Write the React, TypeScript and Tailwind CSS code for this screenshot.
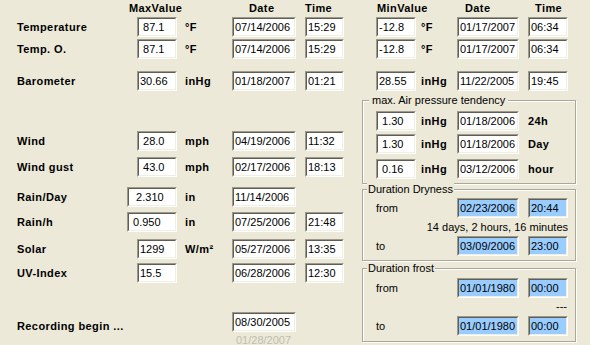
const font = "font-['Liberation_Sans',Arial,sans-serif]";

function Box({ text, w, blue }: { text: string; w: string; blue?: boolean }) {
  return (
    <div className={`${w} h-[20px] shrink-0 border border-t-[#9d9a8c] border-l-[#9d9a8c] border-b-white border-r-white`}>
      <div
        className={`h-full overflow-hidden whitespace-pre border border-t-[#5f5d54] border-l-[#5f5d54] border-b-[#f1efe2] border-r-[#f1efe2] pl-[1px] text-[11px] leading-[16px] text-black ${
          blue ? 'bg-[#99ccff]' : 'bg-white'
        }`}
      >
        {text}
      </div>
    </div>
  );
}

type Row = {
  label: string;
  value: string;
  wide?: boolean;
  unit: string;
  date: string;
  time?: string;
  mt: string;
};

function LeftPart({ row }: { row: Row }) {
  return (
    <>
      <div className="w-[126px] shrink-0 pl-[17px] text-[11px] font-bold tracking-[0.4px]">{row.label}</div>
      <div className="flex w-[51px] shrink-0 justify-end">
        <Box text={row.value} w={row.wide ? 'w-[50px]' : 'w-[40px]'} />
      </div>
      <div className="w-[55px] shrink-0 pl-[8px] text-[11px] font-bold tracking-[0.4px]">{row.unit}</div>
      <Box text={row.date} w="w-[64px]" />
      {row.time && (
        <>
          <div className="w-[9px] shrink-0" />
          <Box text={row.time} w="w-[39px]" />
        </>
      )}
    </>
  );
}

const topRows = [
  { label: 'Temperature', value: ' 87.1', unit: '°F', date: '07/14/2006', time: '15:29', mt: 'mt-[2px]', min: '-12.8', minUnit: '°F', minDate: '01/17/2007', minTime: '06:34' },
  { label: 'Temp. O.', value: ' 87.1', unit: '°F', date: '07/14/2006', time: '15:29', mt: 'mt-[2px]', min: '-12.8', minUnit: '°F', minDate: '01/17/2007', minTime: '06:34' },
  { label: 'Barometer', value: '30.66', unit: 'inHg', date: '01/18/2007', time: '01:21', mt: 'mt-[12px]', min: '28.55', minUnit: 'inHg', minDate: '11/22/2005', minTime: '19:45' },
];

const lowerRows: Row[] = [
  { label: 'Wind', value: ' 28.0', unit: 'mph', date: '04/19/2006', time: '11:32', mt: 'mt-[40px]' },
  { label: 'Wind gust', value: ' 43.0', unit: 'mph', date: '02/17/2006', time: '18:13', mt: 'mt-[6px]' },
  { label: 'Rain/Day', value: '  2.310', wide: true, unit: 'in', date: '11/14/2006', mt: 'mt-[10px]' },
  { label: 'Rain/h', value: ' 0.950', wide: true, unit: 'in', date: '07/25/2006', time: '21:48', mt: 'mt-[5px]' },
  { label: 'Solar', value: '1299', unit: 'W/m²', date: '05/27/2006', time: '13:35', mt: 'mt-[7px]' },
  { label: 'UV-Index', value: '15.5', unit: '', date: '06/28/2006', time: '12:30', mt: 'mt-[4px]' },
];

const tendency = [
  { value: ' 1.30', date: '01/18/2006', label: '24h', mt: 'mt-[4px]' },
  { value: ' 1.30', date: '01/18/2006', label: 'Day', mt: 'mt-[3px]' },
  { value: ' 0.16', date: '03/12/2006', label: 'hour', mt: 'mt-[5px]' },
];

function Group({ title, legend, className, children }: { title: string; legend: string; className: string; children: React.ReactNode }) {
  return (
    <div className={`border border-[#aca899] shadow-[1px_1px_0_#fff,inset_1px_1px_0_#fff] pl-[13px] pr-[7px] ${className}`}>
      <div className={`-mt-[7px] h-[13px] w-fit bg-[#ece9d8] text-[11px] leading-[13px] ${legend}`}>{title}</div>
      {children}
    </div>
  );
}

function SpanRow({ label, date, time, mt }: { label: string; date: string; time: string; mt: string }) {
  return (
    <div className={`flex h-[20px] items-center ${mt}`}>
      <div className="w-[81px] shrink-0 text-[11px]">{label}</div>
      <Box text={date} w="w-[62px]" blue />
      <div className="w-[9px] shrink-0" />
      <Box text={time} w="w-[40px]" blue />
    </div>
  );
}

export default function App() {
  return (
    <div className={`${font} h-[345px] w-[590px] overflow-hidden bg-[#ece9d8] pt-[2px] text-black`}>
      {/* column headings */}
      <div className="flex h-[13px] text-[11px] font-bold leading-[13px] tracking-[0.4px]">
        <div className="w-[129px] shrink-0" />
        <div className="w-[120px] shrink-0">MaxValue</div>
        <div className="w-[56px] shrink-0">Date</div>
        <div className="w-[72px] shrink-0">Time</div>
        <div className="w-[88px] shrink-0">MinValue</div>
        <div className="w-[70px] shrink-0">Date</div>
        <div>Time</div>
      </div>

      {/* rows with max and min */}
      {topRows.map((r) => (
        <div key={r.label} className={`flex h-[20px] items-center ${r.mt}`}>
          <LeftPart row={r} />
          <div className="w-[32px] shrink-0" />
          <Box text={r.min} w="w-[40px]" />
          <div className="w-[41px] shrink-0 pl-[5px] text-[11px] font-bold tracking-[0.4px]">{r.minUnit}</div>
          <Box text={r.minDate} w="w-[62px]" />
          <div className="w-[9px] shrink-0" />
          <Box text={r.minTime} w="w-[40px]" />
        </div>
      ))}

      <div className="flex">
        {/* left column */}
        <div className="w-[362px] shrink-0">
          {lowerRows.map((r) => (
            <div key={r.label} className={`flex h-[20px] items-center ${r.mt}`}>
              <LeftPart row={r} />
            </div>
          ))}
          <div className="mt-[29px] flex h-[20px] items-center">
            <div className="mt-[8px] w-[232px] shrink-0 pl-[17px] text-[11px] font-bold tracking-[0.4px]">Recording begin ...</div>
            <Box text="08/30/2005" w="w-[64px]" />
          </div>
          <div className="mt-[2px] pl-[236px] text-[11px] leading-[13px] text-[#c0bdb0]">01/28/2007</div>
        </div>

        {/* right column */}
        <div className="w-[214px] shrink-0">
          <Group title="max. Air pressure tendency" legend="ml-[-7px] px-[3px]" className="mt-[9px] pb-[4px]">
            {tendency.map((t) => (
              <div key={t.label} className={`flex h-[20px] items-center ${t.mt}`}>
                <Box text={t.value} w="w-[40px]" />
                <div className="w-[41px] shrink-0 pl-[5px] text-[11px] font-bold tracking-[0.4px]">inHg</div>
                <Box text={t.date} w="w-[62px]" />
                <div className="pl-[9px] text-[11px] font-bold tracking-[0.4px]">{t.label}</div>
              </div>
            ))}
          </Group>

          <Group title="Duration Dryness" legend="ml-[-9px] px-[1px]" className="mt-[5px] pb-[4px]">
            <SpanRow label="from" date="02/23/2006" time="20:44" mt="mt-[2px]" />
            <div className="mt-[3px] text-right text-[11px] leading-[13px]">14 days, 2 hours, 16 minutes</div>
            <SpanRow label="to" date="03/09/2006" time="23:00" mt="mt-[2px]" />
          </Group>

          <Group title="Duration frost" legend="ml-[-9px] px-[1px]" className="mt-[7px] pb-[5px]">
            <SpanRow label="from" date="01/01/1980" time="00:00" mt="mt-[3px]" />
            <div className="mt-[2px] pr-[1px] text-right text-[11px] leading-[13px]">---</div>
            <SpanRow label="to" date="01/01/1980" time="00:00" mt="mt-[3px]" />
          </Group>
        </div>
      </div>
    </div>
  );
}
